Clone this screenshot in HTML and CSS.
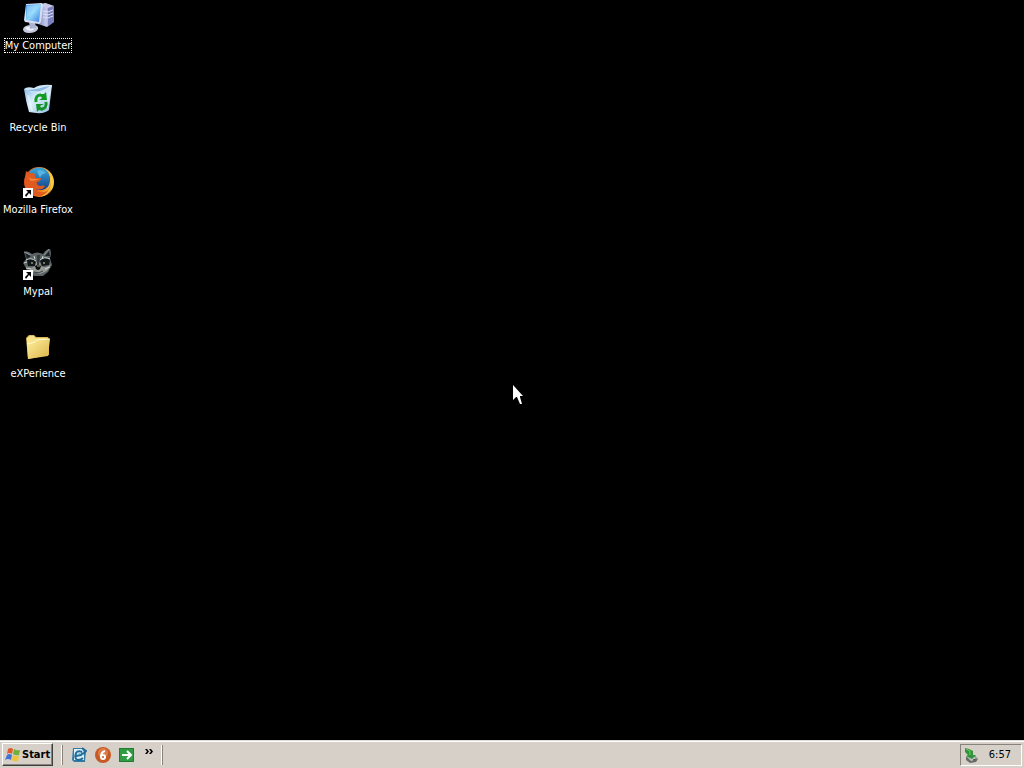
FILE: index.html
```html
<!DOCTYPE html>
<html lang="en">
<head>
<meta charset="utf-8">
<title>Desktop</title>
<link rel="stylesheet" href="styles.css">
</head>
<body>
<main class="desktop">
  <a class="shortcut selected" href="#computer">
    <svg class="icon" viewBox="0 0 32 32">
      <defs>
        <linearGradient id="screen" x1="0" y1="0" x2="1" y2="1"><stop offset="0" stop-color="#4a94ec"/><stop offset=".5" stop-color="#8ed6fa"/><stop offset="1" stop-color="#3a76de"/></linearGradient>
        <linearGradient id="tower" x1="0" y1="0" x2="1" y2="0"><stop offset="0" stop-color="#8088c4"/><stop offset=".5" stop-color="#c6caec"/><stop offset="1" stop-color="#6068a8"/></linearGradient>
      </defs>
      <path d="M16 4 23 1 32 4V20L25 25 16 22Z" fill="url(#tower)"/>
      <path d="M16 4 23 1 32 4 26 6Z" fill="#c6cbea"/>
      <path d="M26 6 32 4V20L26 24Z" fill="#7a82be"/>
      <path d="M21 9l5 1 5-2M21 12l5 1 5-2M21 15l5 1 5-2" stroke="#e0e3f6" fill="none"/>
      <path d="M1 27Q2 23 10 23 17 23 16 27 14 31 7 31 1 31 1 27Z" fill="#c3c9df"/>
      <path d="M3 26Q7 23 13 25L11 28Q6 30 3 26Z" fill="#f2f4fc"/>
      <path d="M7 20h6l1 6-6 1Z" fill="#aab4d4"/>
      <path d="M4 2 20 1Q22 2 21 4L19 20 17 22 3 20 2 18Z" fill="#d7def2"/>
      <path d="M4 3 19 2 17 20 4 18Z" fill="url(#screen)"/>
      <path d="M5 4 16 3Q13 12 5 15Z" fill="#b9edff" opacity=".4"/>
    </svg>
    <span class="label">My Computer</span>
  </a>
  <a class="shortcut" href="#recycle">
    <svg class="icon" viewBox="0 0 32 32">
      <defs><linearGradient id="bin" x1="0" y1="0" x2="1" y2="1"><stop offset="0" stop-color="#7db4e4"/><stop offset=".45" stop-color="#dceffa"/><stop offset="1" stop-color="#8dbde2"/></linearGradient></defs>
      <path d="M2 5Q10 7 20 3L30 1 27 26Q22 31 7 28 4 18 2 5Z" fill="url(#bin)"/>
      <path d="M2 5Q5 2 12 4 18 0 30 1 30 6 21 8 10 10 2 5Z" fill="#cfe7f7"/>
      <path d="M4 6Q14 6 22 3L28 2Q24 5 18 7 10 8 4 6Z" fill="#8ab8e0"/>
      <path d="M6 11 10 27M27 8 25 24" stroke="#f5fcff" stroke-width="2" opacity=".5"/>
      <path d="M14 18Q13 11 19 11" stroke="#159b24" stroke-width="3" fill="none"/>
      <path d="M17 10 22 10 24 8 25 16 17 16 20 14Z" fill="#159b24"/>
      <path d="M24 18Q25 25 19 25" stroke="#16922a" stroke-width="3" fill="none"/>
      <path d="M21 27 17 26 15 28 14 20 22 20 18 22Z" fill="#16922a"/>
    </svg>
    <span class="label">Recycle Bin</span>
  </a>
  <a class="shortcut" href="#firefox">
    <svg class="icon" viewBox="0 0 32 32">
      <defs>
        <linearGradient id="globe" x1="0" y1="0" x2="0" y2="1"><stop offset="0" stop-color="#38a8dc"/><stop offset="1" stop-color="#123f8c"/></linearGradient>
        <linearGradient id="tail" x1="0" y1="0" x2="1" y2="0"><stop offset="0" stop-color="#d8431b"/><stop offset=".55" stop-color="#ef7b1b"/><stop offset="1" stop-color="#fbd84a"/></linearGradient>
      </defs>
      <circle cx="17" cy="16" r="15" fill="url(#tail)"/>
      <path d="M8 5Q14 0 21 2 29 6 28 15 27 23 20 24 9 25 8 16Z" fill="url(#globe)"/>
      <path d="M15 5Q20 2 24 7 19 8 18 12Z" fill="#58b4de"/>
      <path d="M4 5Q6 6 7 8 10 6 13 8 12 10 14 12L19 12Q19 15 15 16 14 19 18 20 21 19 23 20 20 25 14 23 15 27 23 26 28 24 29 17 31 23 25 28 17 33 7 27 1 21 3 12Z" fill="#e05a20"/>
      <path d="M5 10Q7 13 12 13L17 13Q13 15 9 15Z" fill="#f08a3a"/>
      <path d="M25 4Q34 13 29 23 25 30 17 31 29 27 29 15 29 9 25 4Z" fill="#f9c93e"/>
      <path d="M1 22h10v10H1Z" fill="#fff"/><path d="M4 24h5v5L7 27 4 31 3 29 6 26Z" fill="#000"/>
    </svg>
    <span class="label">Mozilla Firefox</span>
  </a>
  <a class="shortcut" href="#mypal">
    <svg class="icon" viewBox="0 0 32 32">
      <path d="M2 4Q5 2 10 6 15 3 21 6 24 1 28 1 30 5 28 10L30 17 26 24 21 28H12L5 22 1 15 4 11Z" fill="#5a6263"/>
      <path d="M3 5 9 8 5 11ZM27 3 28 8 23 8Z" fill="#1d2529"/>
      <path d="M2 4 9 7M27 1 22 7" stroke="#8a9598"/>
      <path d="M5 12Q9 9 14 14L13 18 6 18ZM18 13Q22 8 28 12L27 17 20 18Z" fill="#101719"/>
      <path d="M4 12Q9 9 14 13M18 12Q22 8 28 11" stroke="#c3c9c9" fill="none"/>
      <path d="M3 17Q8 22 13 18L14 14H18L19 18Q24 21 29 16L25 23 18 26 11 24Z" fill="#969b95"/>
      <path d="M15 7h3l-1 12h-2Z" fill="#323a3b"/>
      <path d="M4 20 9 21M5 14 2 15M23 21 28 19M12 8 13 11M21 8 20 11" stroke="#d0d6d4"/>
      <circle cx="10" cy="15" r="1" fill="#969779"/><circle cx="22" cy="15" r="1" fill="#969779"/>
      <path d="M13 18Q16 16 19 18L18 21Q16 23 14 21Z" fill="#090c0e"/><path d="M15 18h3" stroke="#a39a55"/>
      <path d="M12 24Q17 26 21 23" stroke="#3c4242" fill="none"/>
      <path d="M1 22h10v10H1Z" fill="#fff"/><path d="M4 24h5v5L7 27 4 31 3 29 6 26Z" fill="#000"/>
    </svg>
    <span class="label">Mypal</span>
  </a>
  <a class="shortcut" href="#experience">
    <svg class="icon" viewBox="0 0 32 32">
      <defs><linearGradient id="folder" x1="0" y1="0" x2="1" y2="1"><stop offset="0" stop-color="#fdf0a0"/><stop offset="1" stop-color="#dcb448"/></linearGradient></defs>
      <path d="M4 8 7 5 12 5 14 7 26 7 27 9V25L6 29Z" fill="#d9b854"/>
      <path d="M5 8 8 6 12 6 13 8 25 8 24 12 5 15Z" fill="#f6e48c"/>
      <path d="M5 14 13 12 15 10 28 9 26 26 6 29Z" fill="url(#folder)"/>
      <path d="M5 14 13 12 15 10 28 9" stroke="#fff9c7" fill="none"/>
    </svg>
    <span class="label">eXPerience</span>
  </a>
  <svg class="pointer" viewBox="0 0 12 20"><path d="M1 0V15L4 12 5 12 8 19H10L8 12V11H11Z" fill="#fff"/></svg>
</main>
<footer class="taskbar">
  <button class="start" type="button">
    <svg class="small" viewBox="0 0 16 16">
      <path d="M3 2Q6 0 8 2L7 7Q4 5 2 7Z" fill="#e45b2b"/>
      <path d="M9 2Q12 4 15 3L14 8Q11 9 8 7Z" fill="#6fb13b"/>
      <path d="M2 8Q4 6 7 8L6 13Q3 11 0 13Z" fill="#4374d4"/>
      <path d="M8 8Q11 10 14 9L13 14Q9 15 7 13Z" fill="#f3c332"/>
    </svg>
    <span>Start</span>
  </button>
  <span class="divider"></span>
  <nav class="quick" aria-label="Quick Launch">
    <a href="#mail" aria-label="Mail"><svg class="small" viewBox="0 0 16 16">
      <path d="M2 1H12L15 4 14 15H3L1 13Z" fill="#317ca6"/><path d="M3 2H11L13 5V13H3Z" fill="#dff2f7"/>
      <path d="M11 5Q7 3 5 6 3 12 7 13 10 13 12 11M5 9 10 8 12 6M11 1 15 4 12 7" stroke="#226b9b" stroke-width="2" fill="none"/><path d="M7 7 10 6" stroke="#80c6dd"/>
    </svg></a>
    <a href="#six" aria-label="Browser"><svg class="small" viewBox="0 0 16 16">
      <circle cx="8" cy="8" r="8" fill="#c75925"/><circle cx="8" cy="6" r="5" fill="#dc7c48"/>
      <path d="M10 4Q6 5 6 10" stroke="#fff" stroke-width="2" fill="none"/><circle cx="8" cy="10" r="2" stroke="#fff" stroke-width="2" fill="#c75925"/>
    </svg></a>
    <a href="#go" aria-label="Go"><svg class="small" viewBox="0 0 16 16">
      <path d="M0 1H15V15H0Z" fill="#2f9c43"/><path d="M0.500 1.500H14.500V14.500H0.500Z" fill="none" stroke="#207b35"/><path d="M3 8H12M8 4 12 8 8 12" stroke="#fff" stroke-width="2" fill="none"/>
    </svg></a>
    <button class="more" type="button" aria-label="More"><svg class="chevrons" viewBox="0 0 8 5"><path d="M0 0H2L4 2.500 2 5H0L2 2.500ZM4 0H6L8 2.500 6 5H4L6 2.500Z" fill="#000"/></svg></button>
  </nav>
  <span class="divider"></span>
  <div class="tray">
    <svg class="small" viewBox="0 0 16 16">
      <path d="M3 10 11 8 15 12 13 15 7 16 3 13Z" fill="#666b68"/><path d="M4 10 11 9 14 12 8 14Z" fill="#bdc3bc"/>
      <path d="M10 13 13 12" stroke="#4a4f4c"/><path d="M2 1 6 2 10 4 10 8 13 8 9 12 3 9 5 8 2 5Z" fill="#30943b"/><path d="M3 2 7 4 7 8" stroke="#75c66b" fill="none"/>
    </svg>
    <time>6:57</time>
  </div>
</footer>
</body>
</html>
```
FILE: styles.css
```css
* { box-sizing: border-box; }
body {
  margin: 0;
  min-height: 100vh;
  display: flex;
  flex-direction: column;
  background: #000;
  font: 11px/13px "DejaVu Sans Condensed", "DejaVu Sans", sans-serif;
}
a { color: inherit; text-decoration: none; }
svg { display: block; flex: none; }
.desktop {
  position: relative;
  flex: 1;
  display: flex;
  flex-direction: column;
  align-items: flex-start;
  gap: 31px;
  padding-top: 2px;
}
.shortcut {
  min-width: 76px;
  display: flex;
  flex-direction: column;
  align-items: center;
  gap: 4px;
  color: #fff;
}
.icon { width: 32px; height: 32px; }
.label {
  border: 1px dotted transparent;
  white-space: nowrap;
}
.selected .label { border-color: #fff; }
.pointer {
  position: absolute;
  left: 50%;
  top: 52%;
  width: 12px;
  height: 20px;
}
.taskbar {
  display: flex;
  align-items: center;
  gap: 8px;
  height: 28px;
  padding: 1px 2px;
  background: #d6d0c8;
  border-top: 1px solid #dedad4;
  box-shadow: inset 0 1px #fff;
}
.small { width: 16px; height: 16px; }
.start {
  display: flex;
  align-items: center;
  gap: 1px;
  height: 23px;
  padding: 0 2px;
  border: 1px solid;
  border-color: #fff #404040 #404040 #fff;
  box-shadow: inset -1px -1px #87837c;
  background: #d6d0c8;
  color: #000;
  font: inherit;
  font-weight: bold;
}
.divider {
  width: 2px;
  height: 20px;
  border-left: 1px solid #fff;
  border-right: 1px solid #87837c;
}
.quick { display: flex; align-items: center; gap: 8px; }
.more {
  align-self: flex-start;
  padding: 2px 0 2px 2px;
  border: 0;
  background: none;
}
.chevrons { width: 8px; height: 5px; }
.tray {
  margin-left: auto;
  display: flex;
  align-items: center;
  gap: 10px;
  height: 22px;
  padding: 0 10px 0 2px;
  border: 1px solid;
  border-color: #87837c #fff #fff #87837c;
}
```
